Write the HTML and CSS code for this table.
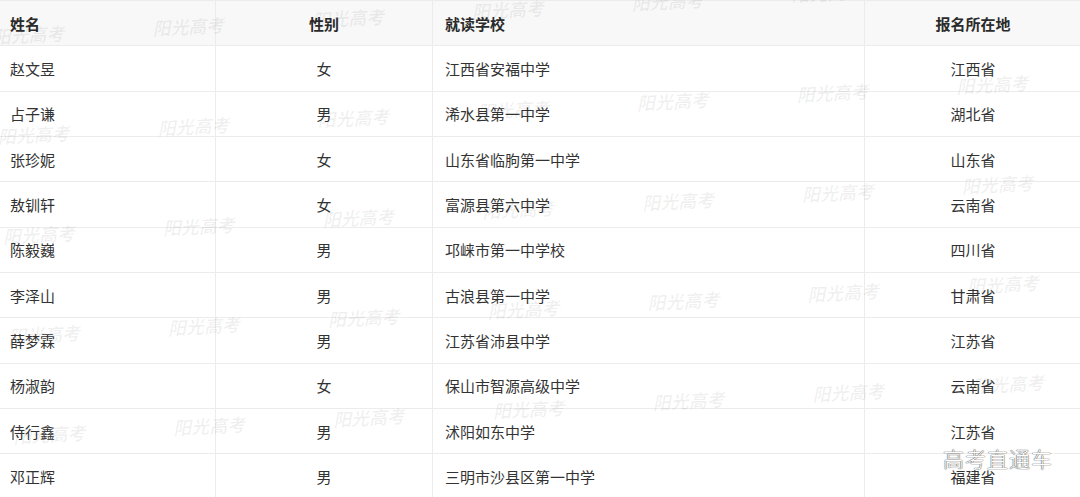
FILE: index.html
```html
<!DOCTYPE html>
<html lang="zh-CN">
<head>
<meta charset="utf-8">
<title>名单</title>
<link rel="stylesheet" href="styles.css">
</head>
<body>
<div class="page">
  <div class="table">
    <div class="cell head left">姓名</div>
    <div class="cell head center">性别</div>
    <div class="cell head school">就读学校</div>
    <div class="cell head center last">报名所在地</div>

    <div class="cell left">赵文昱</div><div class="cell center">女</div><div class="cell school">江西省安福中学</div><div class="cell center last">江西省</div>
    <div class="cell left">占子谦</div><div class="cell center">男</div><div class="cell school">浠水县第一中学</div><div class="cell center last">湖北省</div>
    <div class="cell left">张珍妮</div><div class="cell center">女</div><div class="cell school">山东省临朐第一中学</div><div class="cell center last">山东省</div>
    <div class="cell left">敖钏轩</div><div class="cell center">女</div><div class="cell school">富源县第六中学</div><div class="cell center last">云南省</div>
    <div class="cell left">陈毅巍</div><div class="cell center">男</div><div class="cell school">邛崃市第一中学校</div><div class="cell center last">四川省</div>
    <div class="cell left">李泽山</div><div class="cell center">男</div><div class="cell school">古浪县第一中学</div><div class="cell center last">甘肃省</div>
    <div class="cell left">薛梦霖</div><div class="cell center">男</div><div class="cell school">江苏省沛县中学</div><div class="cell center last">江苏省</div>
    <div class="cell left">杨淑韵</div><div class="cell center">女</div><div class="cell school">保山市智源高级中学</div><div class="cell center last">云南省</div>
    <div class="cell left">侍行鑫</div><div class="cell center">男</div><div class="cell school">沭阳如东中学</div><div class="cell center last">江苏省</div>
    <div class="cell left">邓正辉</div><div class="cell center">男</div><div class="cell school">三明市沙县区第一中学</div><div class="cell center last">福建省</div>
  </div>

  <div class="watermarks" aria-hidden="true">
    <span>阳光高考</span><span>阳光高考</span><span>阳光高考</span><span>阳光高考</span><span>阳光高考</span><span>阳光高考</span><span>阳光高考</span>
    <span>阳光高考</span><span>阳光高考</span><span>阳光高考</span><span>阳光高考</span><span>阳光高考</span><span>阳光高考</span><span>阳光高考</span>
    <span>阳光高考</span><span>阳光高考</span><span>阳光高考</span><span>阳光高考</span><span>阳光高考</span><span>阳光高考</span><span>阳光高考</span>
    <span>阳光高考</span><span>阳光高考</span><span>阳光高考</span><span>阳光高考</span><span>阳光高考</span><span>阳光高考</span><span>阳光高考</span>
    <span>阳光高考</span><span>阳光高考</span><span>阳光高考</span><span>阳光高考</span><span>阳光高考</span><span>阳光高考</span><span>阳光高考</span>
  </div>

  <div class="brand">高考直通车</div>
</div>
</body>
</html>
```

FILE: styles.css
```css
html, body {
  margin: 0;
  padding: 0;
  background: #ffffff;
}

body {
  width: 1080px;
  height: 497px;
  overflow: hidden;
  font-family: "Noto Sans CJK SC", "Noto Sans", sans-serif;
  color: #333333;
}

.page {
  position: relative;
  width: 1080px;
  height: 497px;
  overflow: hidden;
}

.table {
  display: grid;
  grid-template-columns: 216px 217px 432px 216px;
  grid-auto-rows: 45.35px;
  width: 1081px;
  border-top: 1px solid #ececec;
}

.cell {
  box-sizing: border-box;
  display: flex;
  align-items: center;
  font-size: 15px;
  line-height: 1;
  border-bottom: 1px solid #ececec;
  border-right: 1px solid #ececec;
  white-space: nowrap;
}

.cell.last {
  border-right: none;
}

.head {
  background: #f8f8f8;
  font-weight: bold;
  color: #2b2b2b;
}

.left {
  padding-left: 10px;
}

.school {
  padding-left: 12px;
}

.center {
  justify-content: center;
}

.watermarks {
  position: absolute;
  left: -8px;
  top: 27px;
  display: grid;
  grid-template-columns: repeat(7, 160px);
  grid-auto-rows: 100px;
  transform: rotate(-3deg);
  transform-origin: 0 0;
  pointer-events: none;
}

.watermarks span {
  font-family: "Liberation Serif", "Noto Sans CJK SC", serif;
  font-size: 18px;
  line-height: 22px;
  font-weight: bold;
  font-style: italic;
  color: rgba(0, 0, 0, 0.06);
  white-space: nowrap;
}

.brand {
  position: absolute;
  right: 27px;
  top: 444px;
  font-size: 21px;
  line-height: 28px;
  font-weight: 300;
  letter-spacing: 1px;
  color: #ffffff;
  text-shadow: 0 0 1px #3a3a3a, 0 0 1px #3a3a3a;
}
```
